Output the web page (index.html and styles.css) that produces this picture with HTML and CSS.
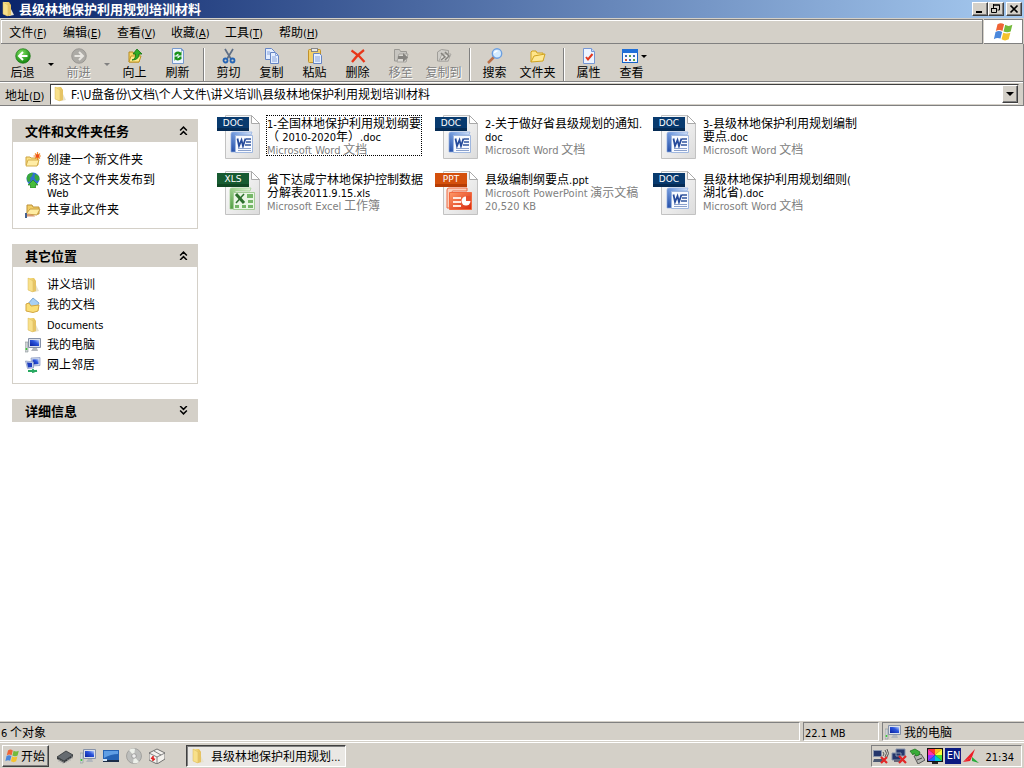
FILE: index.html
```html
<!DOCTYPE html>
<html lang="zh-CN">
<head>
<meta charset="utf-8">
<title>县级林地保护利用规划培训材料</title>
<link rel="stylesheet" href="styles.css">
</head>
<body>
<svg class="defs" aria-hidden="true">
  <defs>
    <linearGradient id="gFold" x1="0" x2="1"><stop offset="0" stop-color="#fdeea0"/><stop offset="1" stop-color="#e2b84a"/></linearGradient>
    <linearGradient id="gPage" x1="0" y1="0" x2="1" y2="1"><stop offset="0" stop-color="#ffffff"/><stop offset="1" stop-color="#dcdcdc"/></linearGradient>
    <linearGradient id="gWord" x1="0" y1="1" x2="1" y2="0"><stop offset="0" stop-color="#1f4aa5"/><stop offset=".6" stop-color="#7fa6e4"/><stop offset="1" stop-color="#dbe8fa"/></linearGradient>
    <linearGradient id="gXls" x1="0" y1="1" x2="1" y2="0"><stop offset="0" stop-color="#4b9a3c"/><stop offset=".6" stop-color="#a9d79a"/><stop offset="1" stop-color="#e6f4e0"/></linearGradient>
    <linearGradient id="gPpt" x1="0" x2="1" y2="1"><stop offset="0" stop-color="#ff9a68"/><stop offset="1" stop-color="#d8280c"/></linearGradient>
    <radialGradient id="gGreen" cx=".4" cy=".3" r=".7"><stop offset="0" stop-color="#7fe060"/><stop offset="1" stop-color="#13860f"/></radialGradient>
    <linearGradient id="gScr" x1="0" y1="1" x2="1" y2="0"><stop offset="0" stop-color="#0a1f9c"/><stop offset=".6" stop-color="#2b55dd"/><stop offset="1" stop-color="#b8cdfa"/></linearGradient>
  </defs>
  <symbol id="folder" viewBox="0 0 16 16"><path d="M3 1h6l2 3v10l-4 1-4-2z" fill="url(#gFold)"/><path d="M9 4l3 6 2 4-5 1z" fill="#e8e2cc"/><path d="M3 1l5 3v11l-5-2z" fill="#f8e08a" stroke="#d9b95c" stroke-width=".5"/><path d="M8 5l3-1v10l-3 1z" fill="#e6c465"/></symbol>
  <symbol id="openfolder" viewBox="0 0 16 16"><path d="M1 14V4l1-1h4l1 2h6v3" fill="#ffe58a" stroke="#d0a21e"/><path d="M1 14l3-6 11-2-2 7z" fill="#ffe995" stroke="#d0a21e"/></symbol>
  <symbol id="back" viewBox="0 0 16 16"><circle cx="8" cy="8" r="7.3" fill="url(#gGreen)" stroke="#1e7a19" stroke-width=".7"/><path d="M8 4L4 8l4 4M4.500 8H12.500" fill="none" stroke="#fff" stroke-width="2"/></symbol>
  <symbol id="forward" viewBox="0 0 16 16"><circle cx="8" cy="8" r="7.3" fill="#adaba6" stroke="#8c8a86" stroke-width=".7"/><path d="M8 4l4 4-4 4M11.500 8H3.500" fill="none" stroke="#e9e7e2" stroke-width="2"/></symbol>
  <symbol id="up" viewBox="0 0 16 16"><path d="M2 14V4h4l1 2h5v8z" fill="#f6d766" stroke="#b58a21"/><path d="M2 14l2-6h10l-2 6z" fill="#ffe98c" stroke="#c19727"/><path d="M5 12q4-1 3.500-6H6l4-5 5 5h-3q0 6-7 6z" fill="#2fac27" stroke="#12740f" stroke-width=".8"/></symbol>
  <symbol id="refresh" viewBox="0 0 16 16"><path d="M2.500.5h9l2 2v13h-11z" fill="#eef5ff" stroke="#7799cc"/><path d="M11.500.5v2h2" fill="none" stroke="#7799cc"/><path d="M4.500 7.500V5Q8 2.500 10.500 4.500L11.500 3v4.500H7.500L9 6Q7.500 5 6 7.500zM11.500 8.500V11Q8 13.500 5.500 11.500L4.500 13V8.500h4L7 10q1.500 1 3-1.500z" fill="#179119"/></symbol>
  <symbol id="cut" viewBox="0 0 16 16"><path d="M4 1l6 10M12 1L6 11" stroke="#5f6f86" stroke-width="1.700"/><circle cx="4.500" cy="12.500" r="2" fill="none" stroke="#2464b5" stroke-width="1.800"/><circle cx="11.500" cy="12.500" r="2" fill="none" stroke="#2464b5" stroke-width="1.800"/></symbol>
  <symbol id="copy" viewBox="0 0 16 16"><g fill="#e4eeff" stroke="#6585c4"><path d="M1.500.5h6l3 3v8h-9z"/><path d="M6.500 4.500h5l3 3v8h-8z"/></g><path d="M11.500 4.500v3h3M8 9h4M8 11h5M8 13h5M3 4h3M3 6h3" fill="none" stroke="#86a3dc"/></symbol>
  <symbol id="paste" viewBox="0 0 16 16"><rect x="1.500" y="1.500" width="12" height="13" rx="1" fill="#f3cf69" stroke="#c0912a"/><rect x="4.500" y=".5" width="6" height="3" fill="#e7e7e7" stroke="#888"/><path d="M6.500 5.500h6l2 2v8h-8z" fill="#e8f0ff" stroke="#6585c4"/><path d="M8 9h5M8 11h5M8 13h5" stroke="#86a3dc"/></symbol>
  <symbol id="delete" viewBox="0 0 16 16"><path d="M1.500 2.500Q9 7 14.500 14M14 2Q7 7 2 14" fill="none" stroke="#e8371a" stroke-width="2.200"/></symbol>
  <symbol id="moveto" viewBox="0 0 16 16"><path d="M1.500 13V1.500h5l1 2h6V13z" fill="#c7c5c0" stroke="#9b9994"/><path d="M4 14l2-8h9l-2 8z" fill="#dad8d3" stroke="#a5a39e"/><path d="M5 8h5V5l5 4.500-5 4.500v-3H5z" fill="#85837f"/></symbol>
  <symbol id="copyto" viewBox="0 0 16 16"><path d="M1.500 13V4l4-2.500 7 1V13z" fill="#cfcdc8" stroke="#a09e99"/><path d="M3 13l3-7h9l-3 7z" fill="#dedcd7" stroke="#aaa8a3"/><path d="M5 5l4 4-4 3M9 4l4 4-4 4" fill="none" stroke="#84827d" stroke-width="1.500"/></symbol>
  <symbol id="search" viewBox="0 0 16 16"><path d="M7 9l-6 6" stroke="#bc7046" stroke-width="2.500"/><circle cx="10" cy="5.500" r="4.700" fill="#d4ecff" stroke="#6c9fe0" stroke-width="1.400"/><path d="M7.500 5q.5-2 3-2" fill="none" stroke="#fff" stroke-width="1.500"/></symbol>
  <symbol id="props" viewBox="0 0 16 16"><path d="M2.500.5h8l3 3v12h-11z" fill="#edf4ff" stroke="#7696d4"/><path d="M10.500.5v3h3" fill="#c9daf8" stroke="#7696d4"/><path d="M5 9l2 2.500L11.500 6" fill="none" stroke="#e3371d" stroke-width="2"/></symbol>
  <symbol id="views" viewBox="0 0 16 16"><rect x=".5" y="1.500" width="15" height="13" fill="#f5f9ff" stroke="#1761c6"/><path d="M0 1h16v4H0z" fill="#1f6fd8"/><path d="M3 7h2v2H3zM11 7h2v2h-2zM7 11h2v2H7z" fill="#3b68b5"/><path d="M7 7h2v2H7zM11 11h2v2h-2z" fill="#57a646"/><path d="M3 11h2v2H3z" fill="#c9503d"/></symbol>
  <symbol id="flag" viewBox="0 0 20 20"><path d="M5 3q3-2 6 0L9.500 9Q6.500 7.500 3.500 9z" fill="#ef6436"/><path d="M12 3.500q3 2 6.500 0L17 9.500q-3 1.500-6.500 0z" fill="#74ba3b"/><path d="M3.200 10q3-2 6 0l-1.500 6q-3-1.500-6 .5z" fill="#4a87dc"/><path d="M10.200 10.700q3 1.500 6.500 0l-1.500 6q-3.500 2-6.500 0z" fill="#f5c22d"/></symbol>
  <symbol id="newfolder" viewBox="0 0 16 16"><path d="M1 13V5h4l1 1h7v7z" fill="#fae083" stroke="#cda342"/><path d="M1 14l2-6h11l-2 6z" fill="#ffeda6" stroke="#d4ae4c"/><path d="M12.500 0v8M8.500 4h8M10 1.500l5 5M15 1.500l-5 5" stroke="#f08a2b" stroke-width="1.200"/><circle cx="12.500" cy="4" r="1.800" fill="#ee4d1c"/></symbol>
  <symbol id="globe" viewBox="0 0 16 16"><circle cx="8" cy="7" r="6.500" fill="#2f72cf"/><path d="M3 2.500Q6 0 8 1l-1 3-2 2 1 3-3 1Q.500 6 3 2.500zM10 2l4 2 .5 4-3 1-2-3z" fill="#39a83d"/><path d="M8 8l5 5h-2.500v3h-5v-3H3z" fill="#48bd3b" stroke="#23811f" stroke-width=".7"/></symbol>
  <symbol id="share" viewBox="0 0 16 16"><path d="M2 12V3h5l1 2h6v7z" fill="#f3cf67" stroke="#bd9139"/><path d="M1 12l4-5h10l-3 6z" fill="#ffeda3" stroke="#c89f43"/><path d="M0 12h4l4 1q2 0 2 1.500H3L0 15z" fill="#d89a70"/><path d="M0 11h2v5H0z" fill="#45618f"/></symbol>
  <symbol id="mydocs" viewBox="0 0 16 16"><path d="M2 8l6-7 6 5-4 7z" fill="#a8d0f4" stroke="#79a7d7"/><path d="M1 14V7l3-1 2 3 8-1-1 6-5 1.500z" fill="#fade77" stroke="#d3a640"/></symbol>
  <symbol id="computer" viewBox="0 0 16 16"><path d="M0 5h3v10H0z" fill="#cfd3d5" stroke="#8c9397" stroke-width=".6"/><path d="M.7 11h1.500v2H.7z" fill="#3bcb35"/><path d="M3.500 1.500h12v9h-12z" fill="#dbe0ea" stroke="#8692a9"/><path d="M5 3h9v6H5z" fill="url(#gScr)"/><path d="M8 11h4l1 3H6z" fill="#b2b6bd"/></symbol>
  <symbol id="network" viewBox="0 0 16 16"><path d="M6 1l9-.5v8L7 9z" fill="#cdd8ee" stroke="#8494bd" stroke-width=".7"/><path d="M7.500 2.500l6-.5v5L8 7.500z" fill="url(#gScr)"/><path d="M.5 4l8 1v6l-6 .5z" fill="#c8d4ed" stroke="#8494bd" stroke-width=".7"/><path d="M2 5.500l5 .5v4l-4 .5z" fill="#1d3dbf"/><path d="M3 14h9M8 12v3l4-1.500" stroke="#28a961" stroke-width="1.800" fill="none"/></symbol>
  <symbol id="page" viewBox="0 0 44 46"><path d="M8.500 1.500h26l8 8v35h-34z" fill="url(#gPage)" stroke="#c2c2c2"/><path d="M34.500 1.500v8h8z" fill="#fff" stroke="#a9a9a9"/></symbol>
  <symbol id="doc" viewBox="0 0 44 46"><use href="#page"/><path d="M14 20q0-2 2-2h19l-1 3H20q-1 0-1 1v16h-5z" fill="url(#gWord)" stroke="#8facdf" stroke-width=".7"/><path d="M18.500 21.500h17v17h-17z" fill="#f9fbff" stroke="#9fb7df"/><path d="M20.500 24.500l1.500 7.500 2.500-6 1.500 6 2.500-7.500" fill="none" stroke="#264b9b" stroke-width="1.800"/><path d="M29 25h5M29 28h5M28 31h6" stroke="#31559f" stroke-width="1.500"/><path d="M21 34.500h13M21 36.500h13" stroke="#8aa0cb"/><path d="M0 3h32v14H0z" fill="#083a6e"/><path d="M0 14h32v3H0z" fill="#052b54"/></symbol>
  <symbol id="xls" viewBox="0 0 44 46"><use href="#page"/><path d="M13 20q0-2 2-2h19l-1 3H19q-1 0-1 1v17h-5z" fill="url(#gXls)" stroke="#9dcd8e" stroke-width=".7"/><path d="M16.500 22.500h21v17h-21z" fill="#e9f5e4" stroke="#a3cc96"/><path d="M30 24h6v4h-6zM31 30h5v3h-5zM31 35h5v3h-5zM25 35h4v3h-4zM18 35h4v3h-4z" fill="#74b667"/><path d="M19 24l8 9" stroke="#2c6f2c" stroke-width="3"/><path d="M27 24l-8 9" stroke="#2c6f2c" stroke-width="1.500"/><path d="M0 3h32v14H0z" fill="#175b31"/><path d="M0 14h32v3H0z" fill="#104723"/></symbol>
  <symbol id="ppt" viewBox="0 0 44 46"><use href="#page"/><path d="M12 20q0-2 2-2h18v3H18q-1 0-1 1v16h-5z" fill="#fbd0bd" stroke="#ee6a43"/><path d="M14.500 22.500h22v17h-22z" fill="url(#gPpt)" stroke="#f2693f"/><path d="M18 28h8M18 32h8M18 36h8" stroke="#ffe8dd" stroke-width="2"/><circle cx="31" cy="31" r="4.500" fill="#fff"/><path d="M31 31v-5h5v5z" fill="#e6502e"/><path d="M0 3h32v14H0z" fill="#d4500c"/><path d="M0 14h32v3H0z" fill="#b63d05"/></symbol>
  <symbol id="chevup" viewBox="0 0 8 8"><path d="M1 4l3-3 3 3M1 8l3-3 3 3" fill="none" stroke="#000" stroke-width="1.300"/></symbol>
  <symbol id="chevdown" viewBox="0 0 8 8"><path d="M1 0l3 3 3-3M1 4l3 3 3-3" fill="none" stroke="#000" stroke-width="1.300"/></symbol>
  <symbol id="chip" viewBox="0 0 16 16"><path d="M0 9l9-6 7 4-9 6z" fill="#666b70" stroke="#303336" stroke-width=".8"/><path d="M0 9v2l7 4v-2zM7 13v2l9-6V7z" fill="#34383b"/><path d="M2 11v3M4 12v3M6 13v3M9 13v2M11 11v3M13 10v3M15 8v3" stroke="#a6a6a6" stroke-width=".8"/></symbol>
  <symbol id="desktop" viewBox="0 0 16 16"><path d="M0 2h16v12H0z" fill="#2563b4"/><path d="M1 3h14v3Q8 6 1 10z" fill="#5f9ee4"/><path d="M0 12h16v2H0z" fill="#1c2c48"/><path d="M0 11h4v2H0z" fill="#d5e7fa"/></symbol>
  <symbol id="disc" viewBox="0 0 16 16"><circle cx="8" cy="8" r="7.500" fill="#bcbdbb" stroke="#898a88" stroke-width=".6"/><path d="M8 8L3 2Q6 0 9 .8zM8 8l5 6q-3 2-6 1z" fill="#edf0ea"/><circle cx="8" cy="8" r="2.300" fill="#eee" stroke="#888" stroke-width=".7"/></symbol>
  <symbol id="firstaid" viewBox="0 0 16 16"><path d="M0 5l8-4 8 4v6l-8 5-8-4z" fill="#f3f1ed" stroke="#555" stroke-width=".8"/><path d="M0 5l8 4 8-4M8 9v7M5 3l7 4" fill="none" stroke="#666" stroke-width=".8"/><path d="M4 8v5M2 10l4 1.500" stroke="#df2424" stroke-width="1.600"/></symbol>
  <symbol id="netoff" viewBox="0 0 16 16"><path d="M5 1h9v7H5zM1 5h9v7H1z" fill="#25366b" stroke="#8995ad"/><path d="M3 13h7" stroke="#667" stroke-width="2"/><path d="M8 8l7 7M15 8l-7 7" stroke="#e22626" stroke-width="2.200"/></symbol>
  <symbol id="wifioff" viewBox="0 0 16 16"><path d="M.5 2.500h8v6h-8z" fill="#25366b" stroke="#8995ad"/><path d="M1 11h8l2 3H0z" fill="#4b5872"/><path d="M10 4q2 2 0 4M12 2q3 3 0 7M14 1q3 5 0 8" fill="none" stroke="#555"/><path d="M8 9l6 6M14 9l-6 6" stroke="#e22626" stroke-width="2.200"/></symbol>
  <symbol id="eject" viewBox="0 0 16 16"><path d="M5 8l7-2 4 6-7 4z" fill="#b5b7b2" stroke="#555"/><path d="M8 12l5-2" stroke="#444"/><path d="M1 3l5-2 5 3-1 3-3 1-2-3-1 2z" fill="#39ad38" stroke="#176e18" stroke-width=".7"/></symbol>
  <symbol id="display" viewBox="0 0 16 16"><path d="M0 0h16v14H0z" fill="#111"/><path d="M8 7L1 1h7z" fill="#f33"/><path d="M8 7V1h7z" fill="#fb2"/><path d="M8 7l7-6v6z" fill="#ff3"/><path d="M8 7h7v6z" fill="#4d3"/><path d="M8 7l7 6H8z" fill="#0cc"/><path d="M8 7v6H1z" fill="#26f"/><path d="M8 7l-7 6V7z" fill="#93f"/><path d="M8 7H1V1z" fill="#f3a"/><path d="M5 14h6v2H5z" fill="#222"/></symbol>
  <symbol id="avira" viewBox="0 0 16 16"><path d="M0 14L12 1 9 9z" fill="#ee1d25"/><path d="M9 9l7 6-7-2z" fill="#24ad3a"/><path d="M0 14l9-5-2 4z" fill="#ee1d25"/></symbol>
</svg>

<div class="screen">
  <header class="titlebar">
    <svg class="ic"><use href="#folder"/></svg>
    <h1 class="title">县级林地保护利用规划培训材料</h1>
    <div class="winbtns">
      <button class="winbtn" aria-label="最小化"><svg viewBox="0 0 12 10"><path d="M2 7h6v2H2z"/></svg></button>
      <button class="winbtn" aria-label="还原"><svg viewBox="0 0 12 10"><path d="M3.500 1h6v5h-2M3.500 0v4M3 1h7" fill="none" stroke="#000"/><path d="M1.500 4.500h5v4h-5zM1 4.500h6" fill="none" stroke="#000"/></svg></button>
      <button class="winbtn close" aria-label="关闭"><svg viewBox="0 0 12 10"><path d="M2.500 1.500l7 7M9.500 1.500l-7 7" stroke="#000" stroke-width="1.700"/></svg></button>
    </div>
  </header>

  <div class="menurow">
    <nav class="menubar">
      <button class="menu">文件<span class="en">(<u>F</u>)</span></button>
      <button class="menu">编辑<span class="en">(<u>E</u>)</span></button>
      <button class="menu">查看<span class="en">(<u>V</u>)</span></button>
      <button class="menu">收藏<span class="en">(<u>A</u>)</span></button>
      <button class="menu">工具<span class="en">(<u>T</u>)</span></button>
      <button class="menu">帮助<span class="en">(<u>H</u>)</span></button>
    </nav>
    <div class="brand"><svg class="flag"><use href="#flag"/></svg></div>
  </div>

  <div class="toolbar">
    <button class="tool"><svg class="ic"><use href="#back"/></svg>后退</button>
    <button class="drop" aria-label="后退列表"><i class="tri"></i></button>
    <button class="tool" disabled><svg class="ic"><use href="#forward"/></svg>前进</button>
    <button class="drop" disabled aria-label="前进列表"><i class="tri"></i></button>
    <button class="tool"><svg class="ic"><use href="#up"/></svg>向上</button>
    <button class="tool"><svg class="ic"><use href="#refresh"/></svg>刷新</button>
    <span class="sep"></span>
    <button class="tool"><svg class="ic"><use href="#cut"/></svg>剪切</button>
    <button class="tool"><svg class="ic"><use href="#copy"/></svg>复制</button>
    <button class="tool"><svg class="ic"><use href="#paste"/></svg>粘贴</button>
    <button class="tool"><svg class="ic"><use href="#delete"/></svg>删除</button>
    <button class="tool" disabled><svg class="ic"><use href="#moveto"/></svg>移至</button>
    <button class="tool" disabled><svg class="ic"><use href="#copyto"/></svg>复制到</button>
    <span class="sep"></span>
    <button class="tool"><svg class="ic"><use href="#search"/></svg>搜索</button>
    <button class="tool"><svg class="ic"><use href="#openfolder"/></svg>文件夹</button>
    <span class="sep"></span>
    <button class="tool"><svg class="ic"><use href="#props"/></svg>属性</button>
    <button class="tool"><span class="pair"><svg class="ic"><use href="#views"/></svg><i class="tri"></i></span>查看</button>
  </div>

  <div class="address">
    <label class="addrlabel" for="addr">地址<span class="en">(<u>D</u>)</span></label>
    <div class="combo">
      <svg class="ic"><use href="#folder"/></svg>
      <input class="addrinput" id="addr" type="text" value="F:\U盘备份\文档\个人文件\讲义培训\县级林地保护利用规划培训材料">
      <button class="combobtn" aria-label="展开"><i class="tri"></i></button>
    </div>
  </div>

  <main class="content">
    <aside class="side">
      <section class="panel">
        <h2 class="phead">文件和文件夹任务<svg class="chev"><use href="#chevup"/></svg></h2>
        <div class="pbody">
          <a class="link" href="#"><svg class="ic"><use href="#newfolder"/></svg><span>创建一个新文件夹</span></a>
          <a class="link" href="#"><svg class="ic"><use href="#globe"/></svg><span>将这个文件夹发布到 <span class="en">Web</span></span></a>
          <a class="link" href="#"><svg class="ic"><use href="#share"/></svg><span>共享此文件夹</span></a>
        </div>
      </section>
      <section class="panel">
        <h2 class="phead">其它位置<svg class="chev"><use href="#chevup"/></svg></h2>
        <div class="pbody">
          <a class="link" href="#"><svg class="ic"><use href="#folder"/></svg><span>讲义培训</span></a>
          <a class="link" href="#"><svg class="ic"><use href="#mydocs"/></svg><span>我的文档</span></a>
          <a class="link" href="#"><svg class="ic"><use href="#folder"/></svg><span><span class="en">Documents</span></span></a>
          <a class="link" href="#"><svg class="ic"><use href="#computer"/></svg><span>我的电脑</span></a>
          <a class="link" href="#"><svg class="ic"><use href="#network"/></svg><span>网上邻居</span></a>
        </div>
      </section>
      <section class="panel">
        <h2 class="phead">详细信息<svg class="chev"><use href="#chevdown"/></svg></h2>
      </section>
    </aside>

    <div class="files">
      <div class="file"><div class="thumb"><svg class="big"><use href="#doc"/></svg><span class="badge">DOC</span></div><div class="ftext focused"><div><span class="en">1-</span>全国林地保护利用规划纲要<br>（<span class="en"> 2010-2020</span>年）<span class="en">.doc</span></div><div class="meta"><span class="en">Microsoft Word</span> 文档</div></div></div>
      <div class="file"><div class="thumb"><svg class="big"><use href="#doc"/></svg><span class="badge">DOC</span></div><div class="ftext"><div><span class="en">2-</span>关于做好省县级规划的通知<span class="en">.<br>doc</span></div><div class="meta"><span class="en">Microsoft Word</span> 文档</div></div></div>
      <div class="file"><div class="thumb"><svg class="big"><use href="#doc"/></svg><span class="badge">DOC</span></div><div class="ftext"><div><span class="en">3-</span>县级林地保护利用规划编制<br>要点<span class="en">.doc</span></div><div class="meta"><span class="en">Microsoft Word</span> 文档</div></div></div>
      <div class="file"><div class="thumb"><svg class="big"><use href="#xls"/></svg><span class="badge">XLS</span></div><div class="ftext"><div>省下达咸宁林地保护控制数据<br>分解表<span class="en">2011.9.15.xls</span></div><div class="meta"><span class="en">Microsoft Excel</span> 工作簿</div></div></div>
      <div class="file"><div class="thumb"><svg class="big"><use href="#ppt"/></svg><span class="badge">PPT</span></div><div class="ftext"><div>县级编制纲要点<span class="en">.ppt</span></div><div class="meta"><span class="en">Microsoft PowerPoint</span> 演示文稿<br><span class="en">20,520 KB</span></div></div></div>
      <div class="file"><div class="thumb"><svg class="big"><use href="#doc"/></svg><span class="badge">DOC</span></div><div class="ftext"><div>县级林地保护利用规划细则<span class="en">(</span><br>湖北省<span class="en">).doc</span></div><div class="meta"><span class="en">Microsoft Word</span> 文档</div></div></div>
    </div>
  </main>

  <div class="status">
    <div class="cell grow"><span><span class="en">6</span> 个对象</span></div>
    <div class="cell size"><span><span class="en">22.1 MB</span></span></div>
    <div class="cell zone"><svg class="ic"><use href="#computer"/></svg>我的电脑</div>
  </div>

  <footer class="taskbar">
    <button class="start"><svg class="ic"><use href="#flag"/></svg>开始</button>
    <div class="quick">
      <svg class="ic"><use href="#chip"/></svg>
      <svg class="ic"><use href="#computer"/></svg>
      <svg class="ic"><use href="#desktop"/></svg>
      <svg class="ic"><use href="#disc"/></svg>
      <svg class="ic"><use href="#firstaid"/></svg>
    </div>
    <button class="task"><svg class="ic"><use href="#folder"/></svg><span>县级林地保护利用规划<span class="en">...</span></span></button>
    <div class="tray">
      <svg class="ic"><use href="#wifioff"/></svg>
      <svg class="ic"><use href="#netoff"/></svg>
      <svg class="ic"><use href="#eject"/></svg>
      <svg class="ic"><use href="#display"/></svg>
      <span class="lang">EN</span>
      <svg class="ic"><use href="#avira"/></svg>
      <span class="clock"><span class="en">21:34</span></span>
    </div>
  </footer>
</div>
</body>
</html>
```
FILE: styles.css
```css
* { box-sizing: border-box; }
body {
  margin: 0;
  background: #fff;
  color: #000;
  font: 12px/13px "Noto Sans CJK SC", sans-serif;
}
/* Latin runs are set smaller and must not stretch the line they sit in */
.en { font-family: "DejaVu Sans Condensed", sans-serif; font-size: 11px; line-height: 1px; }
button {
  font: inherit;
  color: inherit;
  background: none;
  border: 0;
  padding: 0;
}
.defs { position: absolute; width: 0; height: 0; }
.ic { width: 16px; height: 16px; flex: none; display: block; }
.screen { min-height: 100vh; display: flex; flex-direction: column; }

.titlebar {
  height: 18px;
  display: flex;
  align-items: center;
  padding-right: 2px;
  background: linear-gradient(90deg, #0a246a, #a6caf0);
}
.title { flex: 1; margin: 0 0 0 3px; color: #fff; font-size: 13px; font-weight: 700; line-height: 16px; }
.winbtns { display: flex; }
.winbtn {
  width: 16px;
  height: 14px;
  background: #d4d0c8;
  border: 1px solid;
  border-color: #fff #404040 #404040 #fff;
  box-shadow: inset -1px -1px #808080;
}
.winbtn svg { display: block; width: 12px; height: 10px; margin: 1px; }
.close { margin-left: 2px; }

.menurow { display: flex; height: 26px; background: #d4d0c8; border-top: 1px solid #d4d0c8; padding-right: 1px; }
.menubar {
  flex: 1;
  display: flex;
  margin-left: 1px;
  border: 1px solid #808080;
  border-width: 1px 1px 1px 0;
  box-shadow: inset 1px 1px #fff, 0 1px #fff;
}
.menu { padding: 0 8px; line-height: 22px; width: 54px; white-space: nowrap; }
.brand { width: 39px; margin-left: 1px; background: #fff; border: 1px solid #808080; border-left: 0; display: grid; place-items: center; }
.flag { width: 22px; height: 22px; }

.toolbar {
  display: flex;
  height: 38px;
  padding: 4px 1px 0;
  background: #d4d0c8;
  border-right: 1px solid #808080;
  border-bottom: 1px solid #808080;
}
.tool { width: 43px; height: 32px; display: flex; flex-direction: column; align-items: center; line-height: 15px; }
.tool:disabled { color: #808080; text-shadow: 1px 1px #fff; }
.drop { width: 13px; height: 32px; display: grid; place-items: center; }
.tri { display: block; width: 0; height: 0; border: 3px solid transparent; border-top-color: #000; border-bottom: 0; }
.drop:disabled .tri { border-top-color: #808080; }
.sep { width: 2px; height: 33px; margin: 0 2px 0 4px; border-left: 1px solid #808080; border-right: 1px solid #fff; }
.pair { display: flex; align-items: center; gap: 3px; margin-left: 6px; }

.address {
  display: flex;
  align-items: center;
  height: 24px;
  padding: 1px 4px 0 5px;
  background: #d4d0c8;
  border: 1px solid #808080;
  border-width: 0 1px 1px 0;
  box-shadow: inset 0 1px #fff;
}
.addrlabel { width: 45px; }
.combo {
  flex: 1;
  display: flex;
  align-items: center;
  height: 21px;
  padding-left: 1px;
  background: #fff;
  border: 1px solid;
  border-color: #404040 #d4d0c8 #d4d0c8 #404040;
}
.addrinput {
  flex: 1;
  min-width: 0;
  border: 0;
  outline: 0;
  padding: 2px 0 0 3px;
  background: none;
  font: 12px/16px "DejaVu Sans Condensed", "Noto Sans CJK SC", sans-serif;
}
.combobtn {
  width: 16px;
  height: 18px;
  display: grid;
  place-items: center;
  background: #d4d0c8;
  border: 1px solid;
  border-color: #fff #404040 #404040 #fff;
  box-shadow: inset -1px -1px #808080;
}
.combobtn .tri { border-width: 4px 4px 0; }

.content { flex: 1; display: flex; align-items: flex-start; }
.side { width: 186px; margin: 13px 0 0 12px; display: flex; flex-direction: column; gap: 15px; }
.phead {
  display: flex;
  align-items: center;
  justify-content: space-between;
  height: 23px;
  margin: 0;
  padding: 0 10px 0 13px;
  background: #d4d0c8;
  font-size: 13px;
  font-weight: 700;
}
.chev { width: 9px; height: 9px; }
.pbody { display: flex; flex-direction: column; gap: 4px; padding: 10px 36px 10px 12px; border: 1px solid #d4d0c8; border-top: 0; }
.link { display: flex; gap: 6px; min-height: 16px; color: #000; text-decoration: none; }

.files { flex: 1; display: grid; grid-template-columns: repeat(auto-fill, 218px); grid-auto-rows: 56px; margin: 8px 40px 0 19px; }
.file { display: flex; align-items: flex-start; gap: 6px; }
.thumb { position: relative; flex: none; }
.big { display: block; width: 44px; height: 46px; }
.badge {
  position: absolute;
  top: 3px;
  left: 0;
  width: 32px;
  color: #fff;
  font: 9px/13px "DejaVu Sans", sans-serif;
  text-align: center;
}
.ftext { margin-top: 2px; white-space: nowrap; }
.focused { outline: 1px dotted #000; }
.meta { color: #808080; }

.status { display: flex; gap: 3px; height: 20px; padding: 1px 0 0; background: #d4d0c8; }
.cell { display: flex; align-items: center; gap: 3px; height: 19px; padding-left: 2px; border: 1px solid; border-color: #808080 #fff #fff #808080; }
.grow { flex: 1; padding-left: 1px; border-left: 0; }
.size { width: 76px; padding-left: 1px; }
.zone { width: 142px; border-right: 0; }

.taskbar { display: flex; align-items: center; height: 27px; padding: 1px 2px 0; background: #d4d0c8; border-top: 1px solid #d4d0c8; box-shadow: inset 0 1px #fff; }
.start {
  width: 47px;
  height: 22px;
  display: flex;
  align-items: center;
  gap: 1px;
  padding-left: 1px;
  border: 1px solid;
  border-color: #fff #404040 #404040 #fff;
  box-shadow: inset -1px -1px #808080;
}
.quick { display: flex; gap: 7px; margin-left: 8px; }
.task {
  display: flex;
  align-items: center;
  gap: 5px;
  width: 160px;
  height: 22px;
  margin-left: 21px;
  padding-left: 3px;
  background: #eae8e4;
  border: 1px solid;
  border-color: #404040 #fff #fff #404040;
  box-shadow: inset 1px 1px #808080;
}
.tray { display: flex; align-items: center; gap: 2px; height: 22px; margin-left: auto; padding: 0 7px 0 1px; border: 1px solid; border-color: #808080 #fff #fff #808080; }
.lang { width: 16px; height: 16px; background: #0a1a80; color: #fff; font: 11px/16px "DejaVu Sans Condensed", sans-serif; text-align: center; }
.clock { margin-left: 4px; }
```
